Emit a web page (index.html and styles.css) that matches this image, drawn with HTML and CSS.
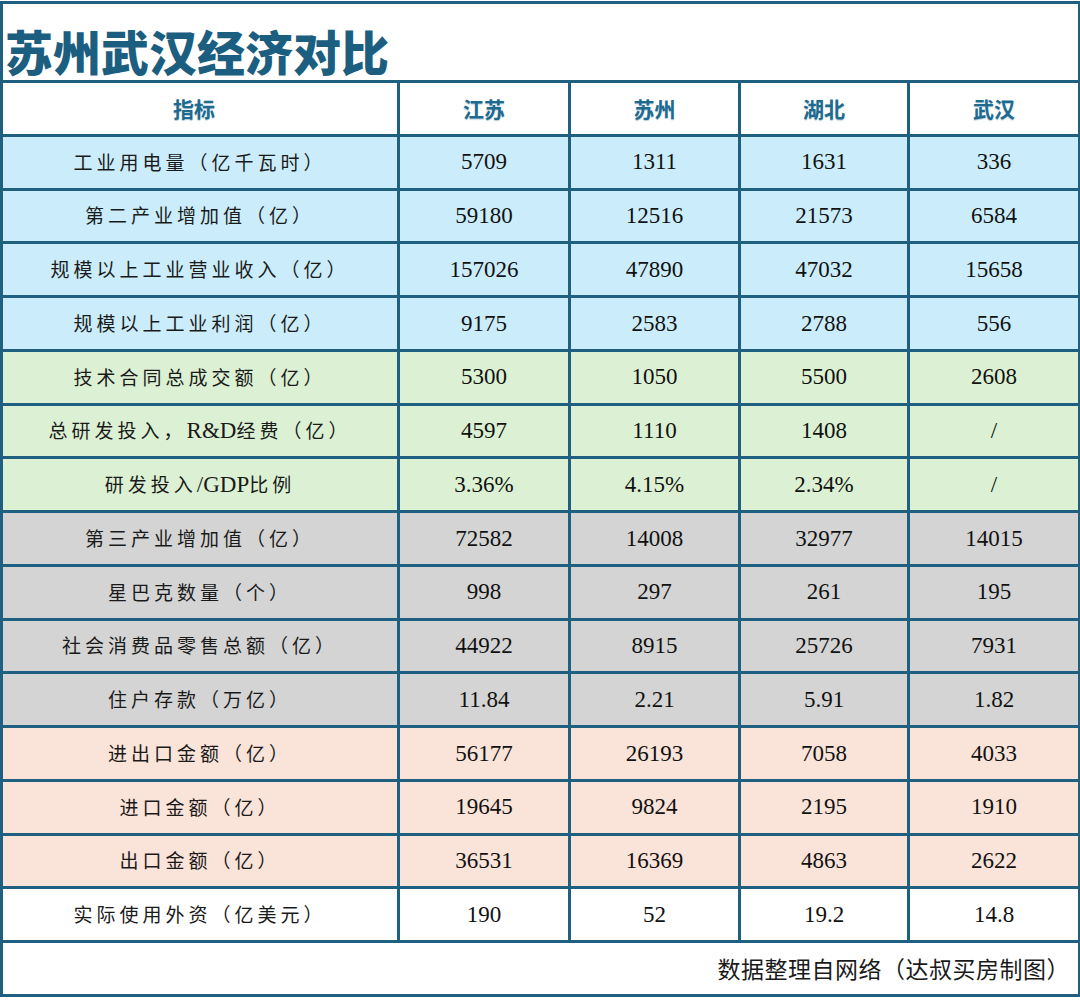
FILE: index.html
```html
<!DOCTYPE html>
<html lang="zh-CN">
<head>
<meta charset="utf-8">
<title>苏州武汉经济对比</title>
<link rel="stylesheet" href="styles.css">
</head>
<body>
<table class="sheet">
  <colgroup>
    <col class="c-name"><col class="c-a"><col class="c-b"><col class="c-c"><col class="c-d">
  </colgroup>
  <tr class="title-row"><td colspan="5" class="title">苏州武汉经济对比</td></tr>
  <tr class="head">
    <th>指标</th><th>江苏</th><th>苏州</th><th>湖北</th><th>武汉</th>
  </tr>
  <tr class="blue"><td class="name">工业用电量（亿千瓦时）</td><td>5709</td><td>1311</td><td>1631</td><td>336</td></tr>
  <tr class="blue"><td class="name">第二产业增加值（亿）</td><td>59180</td><td>12516</td><td>21573</td><td>6584</td></tr>
  <tr class="blue"><td class="name">规模以上工业营业收入（亿）</td><td>157026</td><td>47890</td><td>47032</td><td>15658</td></tr>
  <tr class="blue"><td class="name">规模以上工业利润（亿）</td><td>9175</td><td>2583</td><td>2788</td><td>556</td></tr>
  <tr class="green"><td class="name">技术合同总成交额（亿）</td><td>5300</td><td>1050</td><td>5500</td><td>2608</td></tr>
  <tr class="green"><td class="name">总研发投入，<span class="lat">R&amp;D</span>经费（亿）</td><td>4597</td><td>1110</td><td>1408</td><td>/</td></tr>
  <tr class="green"><td class="name">研发投入<span class="lat">/GDP</span>比例</td><td>3.36%</td><td>4.15%</td><td>2.34%</td><td>/</td></tr>
  <tr class="grey"><td class="name">第三产业增加值（亿）</td><td>72582</td><td>14008</td><td>32977</td><td>14015</td></tr>
  <tr class="grey"><td class="name">星巴克数量（个）</td><td>998</td><td>297</td><td>261</td><td>195</td></tr>
  <tr class="grey"><td class="name">社会消费品零售总额（亿）</td><td>44922</td><td>8915</td><td>25726</td><td>7931</td></tr>
  <tr class="grey"><td class="name">住户存款（万亿）</td><td>11.84</td><td>2.21</td><td>5.91</td><td>1.82</td></tr>
  <tr class="peach"><td class="name">进出口金额（亿）</td><td>56177</td><td>26193</td><td>7058</td><td>4033</td></tr>
  <tr class="peach"><td class="name">进口金额（亿）</td><td>19645</td><td>9824</td><td>2195</td><td>1910</td></tr>
  <tr class="peach"><td class="name">出口金额（亿）</td><td>36531</td><td>16369</td><td>4863</td><td>2622</td></tr>
  <tr class="white"><td class="name">实际使用外资（亿美元）</td><td>190</td><td>52</td><td>19.2</td><td>14.8</td></tr>
  <tr class="foot-row"><td colspan="5" class="foot">数据整理自网络（达叔买房制图）</td></tr>
</table>
</body>
</html>
```

FILE: styles.css
```css
html, body {
  margin: 0;
  padding: 0;
  background: #ffffff;
}

.sheet {
  border-collapse: collapse;
  table-layout: fixed;
  width: 1079px;
  margin: 1px 0 0 0;
  border: 3px solid #1f5f80;
}

.c-name { width: 397px; }
.c-a { width: 171px; }
.c-b { width: 170px; }
.c-c { width: 169px; }
.c-d { width: 171px; }

.sheet td,
.sheet th {
  border: 3px solid #1f5f80;
  padding: 0;
  text-align: center;
  vertical-align: middle;
  height: 50.75px;
  line-height: 1.2;
  font-family: "Liberation Serif", "Times New Roman", serif;
  font-size: 23px;
  color: #111111;
}

.title-row td.title {
  height: 70px;
  text-align: left;
  vertical-align: bottom;
  padding: 0 0 6px 2px;
  font-family: "Noto Sans CJK SC", "Noto Sans", sans-serif;
  font-weight: 900;
  font-size: 48px;
  line-height: 1;
  color: #1b5e80;
  letter-spacing: 0;
}

.head th {
  background: #ffffff;
  font-family: "Noto Sans CJK SC", "Noto Sans", sans-serif;
  font-weight: 700;
  font-size: 21px;
  color: #1f6a8f;
  text-shadow: 0 1px 1px rgba(31, 106, 143, 0.35);
}

.head th:first-child {
  padding-right: 12px;
}

.sheet td.name {
  font-family: "Noto Sans CJK SC", "Noto Sans", sans-serif;
  font-size: 19px;
  font-weight: 400;
  letter-spacing: 4px;
  color: #1a1a1a;
}

.sheet td.name .lat {
  font-family: "Liberation Serif", "Times New Roman", serif;
  font-size: 23px;
  letter-spacing: 0;
}

.blue td { background: #cbedfb; }
.green td { background: #dcf1d3; }
.grey td { background: #d4d4d4; }
.peach td { background: #fae3d8; }
.white td { background: #ffffff; }

.foot-row td.foot {
  height: 51px;
  text-align: right;
  padding: 0 8px 0 0;
  font-family: "Noto Sans CJK SC", "Noto Sans", sans-serif;
  font-size: 23px;
  letter-spacing: 0.5px;
  color: #1a1a1a;
}
```
